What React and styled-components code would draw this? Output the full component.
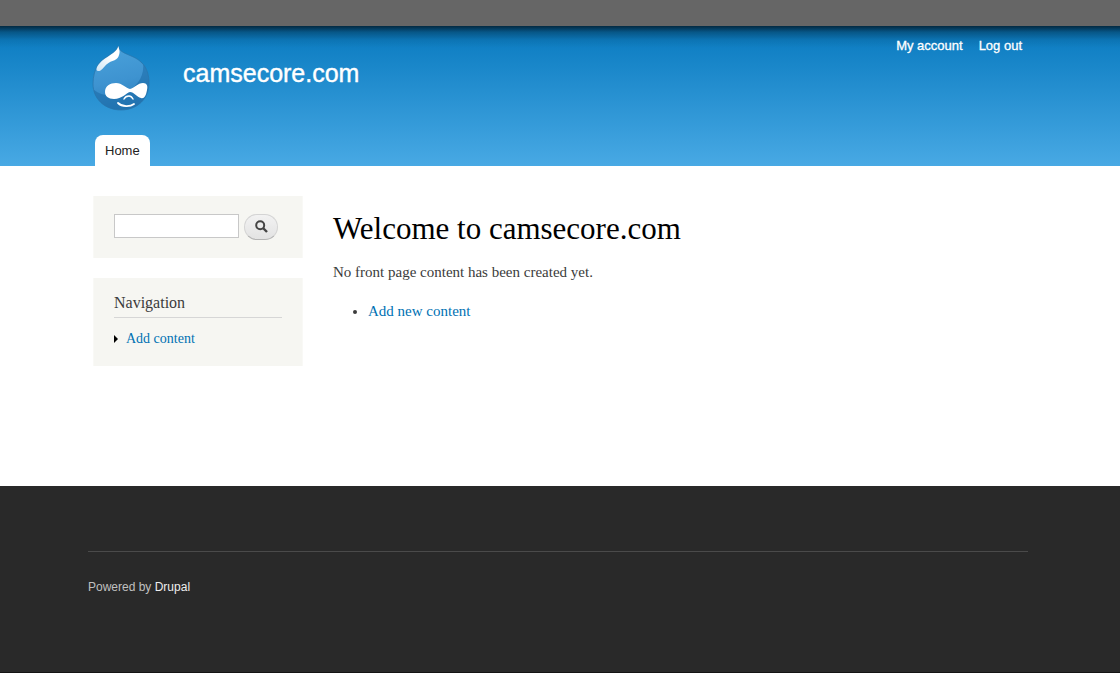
import React from "react";
import styled, { createGlobalStyle } from "styled-components";

const serif = `Georgia, "Liberation Serif", serif`;
const sans = `"Liberation Sans", Helvetica, Arial, sans-serif`;

const GlobalStyle = createGlobalStyle`
  *, *::before, *::after { box-sizing: border-box; }
  html { background: #292929; }
  body { margin: 0; font-family: ${serif}; color: #3b3b3b; }
  h1, h2, p, ul { margin: 0; padding: 0; font-weight: normal; }
  a { color: #0071b3; text-decoration: none; }
  a:hover { text-decoration: underline; }
`;

const Page = styled.div`
  display: flex;
  flex-direction: column;
  min-height: 100vh;
`;

const AdminBar = styled.div`
  height: 26px;
  background: #666;
`;

const Container = styled.div`
  padding: 0 92px 0 88px;
`;

const Header = styled.header`
  background:
    linear-gradient(rgba(0, 0, 0, 0.66), rgba(0, 0, 0, 0.3) 6px, rgba(0, 0, 0, 0.08) 14px, transparent 22px),
    linear-gradient(#0779bf, #48a9e4);
  font-family: ${sans};
`;

const HeaderInner = styled(Container)`
  display: flex;
  flex-direction: column;
  justify-content: space-between;
  height: 140px;
`;

const HeaderTop = styled.div`
  display: flex;
  align-items: flex-start;
`;

const LogoLink = styled.a`
  display: block;
  padding: 19px 0 0 3px;
  svg { display: block; }
`;

const SiteName = styled.h1`
  flex: 1;
  padding: 32px 0 0 32px;
  font-size: 25px;
  line-height: 30px;
  a { color: #fff; -webkit-text-stroke: 0.4px #fff; }
`;

const UserMenu = styled.nav`
  display: flex;
  gap: 16px;
  padding: 10px 6px 0 0;
  font-size: 13px;
  line-height: 20px;
  a { color: #fff; -webkit-text-stroke: 0.3px #fff; }
`;

const Tabs = styled.nav`
  display: flex;
  padding-left: 7px;
`;

const Tab = styled.a`
  padding: 0 10px;
  border-radius: 8px 8px 0 0;
  background: #fff;
  font-size: 13px;
  line-height: 31px;
  && { color: #222; }
`;

const Main = styled.div`
  flex: 1;
  background: #fff;
`;

const Columns = styled(Container)`
  display: flex;
  gap: 30px;
  padding-top: 30px;
  padding-bottom: 30px;
`;

const Sidebar = styled.aside`
  display: flex;
  flex-direction: column;
  flex: none;
  gap: 20px;
  width: 215px;
  padding-left: 5px;
`;

const Block = styled.section`
  padding: ${(p) => (p.$compact ? "18px 20px" : "14px 20px 16px")};
  border: 1px solid #f9f9f6;
  border-width: 0 1px;
  background: #f6f6f2;
`;

const SearchForm = styled.form`
  display: flex;
  align-items: flex-start;
  gap: 5px;
`;

const SearchInput = styled.input`
  width: 125px;
  height: 24px;
  padding: 2px 4px;
  border: 1px solid #c8c8c8;
  border-radius: 0;
  background: #fff;
  font: 14px ${sans};
`;

const SearchButton = styled.button`
  display: flex;
  align-items: center;
  justify-content: center;
  width: 34px;
  height: 26px;
  padding: 0 0 2px;
  border: 1px solid #d4d4d4;
  border-bottom-color: #b4b4b4;
  border-radius: 13px;
  background: linear-gradient(#f2f2f2, #e3e3e3);
  cursor: pointer;
`;

const BlockTitle = styled.h2`
  padding-bottom: 4px;
  border-bottom: 1px solid #d6d6d6;
  font-size: 16px;
  line-height: 21px;
`;

const Menu = styled.ul`
  padding-top: 10px;
  list-style: none;
  font-size: 14px;
  line-height: 22px;
`;

const MenuItem = styled.li`
  display: flex;
  align-items: center;
  gap: 8px;
`;

const Arrow = styled.span`
  border: solid transparent;
  border-width: 4px 0 4px 4px;
  border-left-color: #000;
`;

const Content = styled.main`
  flex: 1;
  padding-top: 14px;
`;

const Title = styled.h1`
  color: #000;
  font-size: 31px;
  line-height: 38px;
`;

const Text = styled.p`
  padding-top: 13px;
  font-size: 15px;
  line-height: 22px;
`;

const Links = styled.ul`
  margin-top: 17px;
  padding-left: 35px;
  font-size: 15px;
  line-height: 22px;
`;

const Footer = styled.footer`
  height: 187px;
  padding-top: 65px;
  border-bottom: 1px solid #141414;
  background: #292929;
  font-family: ${sans};
`;

const Powered = styled.p`
  && { padding-top: 25px; }
  border-top: 1px solid #4a4a4a;
  color: #c0c0c0;
  font-size: 12px;
  line-height: 20px;
  a { color: #eee; }
`;

function Logo() {
  const drop =
    "M27 1C28 6 33 8 39 10.500C45 13 48 15 51 18C56 23 58 30 58 38C58 54 46 65 30 65C14 65 2 54 2 39C2 31 4 24 7.500 19C10 15 16 12 20 9C23 7 26 5 27 1Z";
  return (
    <svg width="60" height="67" viewBox="0 0 60 67" role="img" aria-label="Home">
      <defs>
        <linearGradient id="drop" x1="0" y1="0" x2="0.2" y2="1">
          <stop offset="0" stopColor="#4ba3dc" />
          <stop offset="0.6" stopColor="#3e93d0" />
          <stop offset="1" stopColor="#2c7fbd" />
        </linearGradient>
        <linearGradient id="shine" x1="1" y1="0" x2="0" y2="1">
          <stop offset="0.4" stopColor="#fff" />
          <stop offset="1" stopColor="#fff" stopOpacity="0.75" />
        </linearGradient>
        <clipPath id="dropShape">
          <path d={drop} />
        </clipPath>
      </defs>
      <g clipPath="url(#dropShape)">
        <path fill="url(#drop)" d="M0 0H60V67H0Z" />
        <path fill="#1a6aa6" opacity="0.55" d="M52 17C54 32 45 43 33 48C21 52 10 51 3 45V67H60V19Z" />
      </g>
      <path fill="none" stroke="#2873aa" strokeWidth="0.9" opacity="0.8" d={drop} />
      <path fill="url(#shine)" d="M27.300 1C28 4 29 6 28.500 8C28 11 27 13 25.500 14C23 16 20 16 17.500 18C14 20 12 24 9.500 25.500C7.500 26.500 5.500 26 5.500 24.500C5.500 22 7 20 8.500 18.500C11 15 16 12.500 20 9.500C23 7.500 26.500 5 27.300 1Z" />
      <path fill="#fff" d="M25 38C31 38 35 43 39 44C43 43 47 38 52 38C56 38 57 41 56 45C55 51 53 54 50 53C46 52 43 47 39 47C35 48 31 54 23 54C17 54 14 51 14 47C14 41 19 38 25 38Z" />
      <path fill="none" stroke="#fff" strokeWidth="1.4" strokeLinecap="round" d="M33 54C34 52 36 51 38 51C40 51 41 52 42 54" />
      <path fill="none" stroke="#fff" strokeWidth="1.8" strokeLinecap="round" d="M27 58C31 62 39 62 43 59" />
    </svg>
  );
}

function SearchIcon() {
  return (
    <svg width="13" height="13" viewBox="0 0 13 13" fill="none" stroke="#444" aria-hidden="true">
      <circle cx="5.2" cy="5.2" r="4" strokeWidth="2" />
      <path d="M8 8L12 12" strokeWidth="2.4" />
    </svg>
  );
}

export default function App() {
  return (
    <Page>
      <GlobalStyle />
      <AdminBar />
      <Header>
        <HeaderInner>
          <HeaderTop>
            <LogoLink href="#"><Logo /></LogoLink>
            <SiteName><a href="#">camsecore.com</a></SiteName>
            <UserMenu aria-label="User menu">
              <a href="#">My account</a>
              <a href="#">Log out</a>
            </UserMenu>
          </HeaderTop>
          <Tabs aria-label="Main menu">
            <Tab href="#">Home</Tab>
          </Tabs>
        </HeaderInner>
      </Header>
      <Main>
        <Columns>
          <Sidebar>
            <Block $compact>
              <SearchForm role="search" onSubmit={(e) => e.preventDefault()}>
                <SearchInput type="text" aria-label="Search" />
                <SearchButton type="submit" aria-label="Search"><SearchIcon /></SearchButton>
              </SearchForm>
            </Block>
            <Block>
              <BlockTitle>Navigation</BlockTitle>
              <Menu>
                <MenuItem><Arrow /><a href="#">Add content</a></MenuItem>
              </Menu>
            </Block>
          </Sidebar>
          <Content>
            <Title>Welcome to camsecore.com</Title>
            <Text>No front page content has been created yet.</Text>
            <Links>
              <li><a href="#">Add new content</a></li>
            </Links>
          </Content>
        </Columns>
      </Main>
      <Footer>
        <Container>
          <Powered>Powered by <a href="#">Drupal</a></Powered>
        </Container>
      </Footer>
    </Page>
  );
}
